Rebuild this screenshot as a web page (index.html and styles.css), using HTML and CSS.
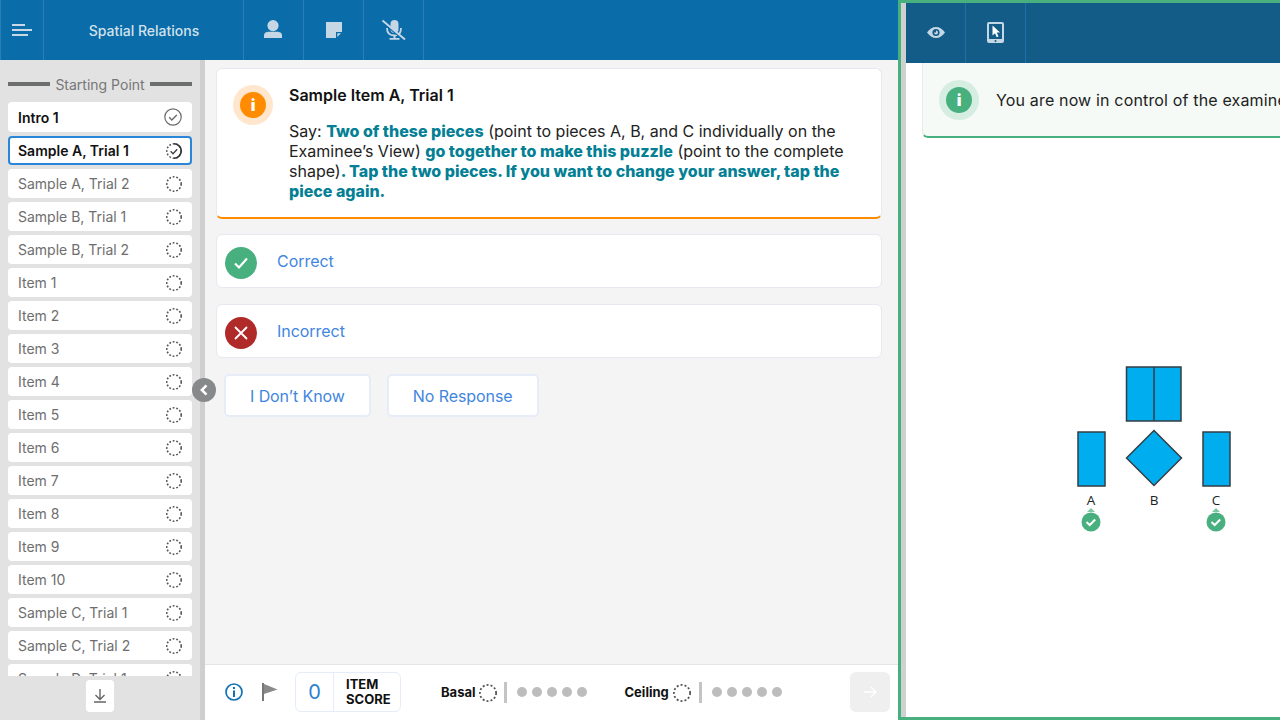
FILE: index.html
```html
<!DOCTYPE html>
<html lang="en">
<head>
<meta charset="utf-8">
<title>Spatial Relations</title>
<link rel="stylesheet" href="styles.css">
</head>
<body>
<svg class="defs" width="0" height="0" aria-hidden="true">
  <symbol id="ring" viewBox="0 0 16 16"><circle cx="8" cy="8" r="7.2" fill="none" stroke="#555" stroke-width="1.6" stroke-dasharray="1.8 1.8"/></symbol>
</svg>
<section class="examiner">
  <header class="topbar">
    <button class="tb tb-menu"><svg width="20" height="12" viewBox="0 0 20 12"><path d="M0 0h13v2H0zM0 5h20v2H0zM0 10h16v2H0z" fill="#c8d8e6"/></svg></button>
    <div class="tb tb-title">Spatial Relations</div>
    <button class="tb tb-icon"><svg class="ic-person" width="18" height="18" viewBox="0 0 18 18"><circle cx="9" cy="5.6" r="5.6" fill="#c5d6e5"/><path d="M0 18v-2.500c0-2.800 2.500-3.800 5-3.800h8c2.500 0 5 1 5 3.800V18z" fill="#c5d6e5"/></svg></button>
    <button class="tb tb-icon"><svg width="16" height="16" viewBox="0 0 16 16"><rect width="16" height="16" fill="#c5d6e5"/><rect x="10" y="10" width="6" height="6" fill="#0a6ca8"/><path d="M11.300 11.300H15L11.300 15z" fill="#c5d6e5"/></svg></button>
    <button class="tb tb-icon"><svg width="26" height="22" viewBox="0 0 26 22"><rect x="9.500" y="1" width="8" height="13" rx="4" fill="#c5d6e5"/><path d="M6 9c0 5 3 7.500 7.500 7.500S20 14 20 9" fill="none" stroke="#c5d6e5" stroke-width="1.800"/><path d="M12.500 16h2v3h-2zM8.500 19h10v1.800h-10z" fill="#c5d6e5"/><path d="M1.500 3.200l22.500 19" stroke="#0a6ca8" stroke-width="1.600"/><path d="M1.500 1.500l22.500 19" stroke="#c5d6e5" stroke-width="2"/></svg></button>
  </header>
  <div class="workspace">
    <aside class="sidebar">
      <div class="side-head"><span class="rule"></span><span>Starting Point</span><span class="rule"></span></div>
      <ul class="items">
        <li class="item done"><span>Intro 1</span><svg width="18" height="18" viewBox="0 0 18 18"><circle cx="9" cy="9" r="8.200" fill="none" stroke="#6b6b6b" stroke-width="1.200"/><path d="M5.200 9.300l2.600 2.600 5-5" fill="none" stroke="#6b6b6b" stroke-width="1.400"/></svg></li>
        <li class="item active"><span>Sample A, Trial 1</span><svg width="16" height="16" viewBox="0 0 16 16"><circle cx="8" cy="8" r="7.200" fill="none" stroke="#555" stroke-width="1.500" stroke-dasharray="1.800 1.800"/><path d="M8 .8A7.200 7.200 0 0 1 8 15.200" fill="none" stroke="#333" stroke-width="1.600"/><path d="M4.600 8.300l2.400 2.400 4.200-4.500" fill="none" stroke="#444" stroke-width="1.400"/></svg></li>
        <li class="item"><span>Sample A, Trial 2</span><svg class="ring"><use href="#ring"/></svg></li>
        <li class="item"><span>Sample B, Trial 1</span><svg class="ring"><use href="#ring"/></svg></li>
        <li class="item"><span>Sample B, Trial 2</span><svg class="ring"><use href="#ring"/></svg></li>
        <li class="item"><span>Item 1</span><svg class="ring"><use href="#ring"/></svg></li>
        <li class="item"><span>Item 2</span><svg class="ring"><use href="#ring"/></svg></li>
        <li class="item"><span>Item 3</span><svg class="ring"><use href="#ring"/></svg></li>
        <li class="item"><span>Item 4</span><svg class="ring"><use href="#ring"/></svg></li>
        <li class="item"><span>Item 5</span><svg class="ring"><use href="#ring"/></svg></li>
        <li class="item"><span>Item 6</span><svg class="ring"><use href="#ring"/></svg></li>
        <li class="item"><span>Item 7</span><svg class="ring"><use href="#ring"/></svg></li>
        <li class="item"><span>Item 8</span><svg class="ring"><use href="#ring"/></svg></li>
        <li class="item"><span>Item 9</span><svg class="ring"><use href="#ring"/></svg></li>
        <li class="item"><span>Item 10</span><svg class="ring"><use href="#ring"/></svg></li>
        <li class="item"><span>Sample C, Trial 1</span><svg class="ring"><use href="#ring"/></svg></li>
        <li class="item"><span>Sample C, Trial 2</span><svg class="ring"><use href="#ring"/></svg></li>
        <li class="item"><span>Sample D, Trial 1</span><svg class="ring"><use href="#ring"/></svg></li>
      </ul>
      <div class="side-foot"><button class="down"><svg width="14" height="14" viewBox="0 0 14 14"><path d="M7 0v10M2.500 6L7 10.500 11.500 6M1 13h12" fill="none" stroke="#666" stroke-width="1.400"/></svg></button></div>
    </aside>
    <button class="collapse"><svg width="10" height="12" viewBox="0 0 10 12"><path d="M7.500 1.300L2.800 6l4.700 4.700" fill="none" stroke="#fff" stroke-width="2.500"/></svg></button>
    <main class="main">
      <div class="content">
        <article class="card">
          <div class="halo halo-orange"><span class="dot dot-orange">i</span></div>
          <div class="card-text">
            <h2>Sample Item A, Trial 1</h2>
            <p>Say: <b>Two of these pieces</b> (point to pieces A, B, and C individually on the Examinee’s View) <b>go together to make this puzzle</b> (point to the complete shape)<b>. Tap the two pieces. If you want to change your answer, tap the piece again.</b></p>
          </div>
        </article>
        <div class="option">
          <span class="opt-icon opt-green"><svg width="16" height="14" viewBox="0 0 16 14"><path d="M2 7.500l4 4 8-9" fill="none" stroke="#fff" stroke-width="2.200"/></svg></span>
          <span>Correct</span>
        </div>
        <div class="option">
          <span class="opt-icon opt-red"><svg width="14" height="14" viewBox="0 0 14 14"><path d="M1 1l12 12M13 1L1 13" fill="none" stroke="#fff" stroke-width="1.800"/></svg></span>
          <span>Incorrect</span>
        </div>
        <div class="actions">
          <button class="act">I Don’t Know</button>
          <button class="act">No Response</button>
        </div>
      </div>
      <footer class="footer">
        <svg class="f-info" width="18" height="18" viewBox="0 0 18 18"><circle cx="9" cy="9" r="8" fill="none" stroke="#1273b4" stroke-width="1.700"/><path d="M8 4h2v2H8zM8 7.500h2V14H8z" fill="#1273b4"/></svg>
        <svg class="f-flag" width="16" height="18" viewBox="0 0 16 18"><path d="M0 0h2v18H0z" fill="#777"/><path d="M2 1l13.500 5.500L2 11z" fill="#8a8a8a"/></svg>
        <div class="score"><span class="score-val">0</span><span class="score-lbl">ITEM<br>SCORE</span></div>
        <div class="meter meter-basal">
          <span class="m-label">Basal</span><svg class="m-ring"><use href="#ring"/></svg><span class="m-bar"></span>
          <span class="pips"><i></i><i></i><i></i><i></i><i></i></span>
        </div>
        <div class="meter meter-ceil">
          <span class="m-label">Ceiling</span><svg class="m-ring"><use href="#ring"/></svg><span class="m-bar"></span>
          <span class="pips"><i></i><i></i><i></i><i></i><i></i></span>
        </div>
        <button class="next"><svg width="14" height="12" viewBox="0 0 14 12"><path d="M1 6h12M8 1l5 5-5 5" fill="none" stroke="#fff" stroke-width="1.400"/></svg></button>
      </footer>
    </main>
  </div>
</section>
<section class="examinee">
  <div class="grip"></div>
  <div class="pane">
    <header class="topbar2">
      <button class="tb2"><svg width="18" height="11" viewBox="0 0 18 11"><path d="M0 5.500C2.500 2 5.500 0 9 0s6.500 2 9 5.500C15.500 9 12.500 11 9 11S2.500 9 0 5.500z" fill="#c5d6e5"/><circle cx="9" cy="5.500" r="3.600" fill="#135c88"/><path d="M9 3.500a2 2 0 1 1-2 2h2z" fill="#c5d6e5"/></svg></button>
      <button class="tb2"><svg width="17" height="21" viewBox="0 0 17 21"><rect width="17" height="21" rx="2" fill="#c5d6e5"/><rect x="2" y="2" width="13" height="15" fill="#135c88"/><path d="M5.500 3.500v10l2.500-2.300 1.800 4 1.700-.8-1.800-3.800h3.300z" fill="#fff"/><circle cx="8.500" cy="19" r="1" fill="#135c88"/></svg></button>
    </header>
    <div class="banner">
      <div class="halo halo-green"><span class="dot dot-green">i</span></div>
      <span class="banner-text">You are now in control of the examinee’s screen.</span>
    </div>
    <div class="stage">
      <svg class="puzzle" width="170" height="175" viewBox="0 0 170 175">
        <g fill="#00adef" stroke="#333d44" stroke-width="1.500">
          <rect x="58.500" y="7" width="54.500" height="54"/>
          <path d="M86 7v54" fill="none"/>
          <rect x="10" y="72" width="27" height="54"/>
          <path d="M86 70.500l27.500 27.500-27.500 27.500-27.500-27.500z"/>
          <rect x="135" y="72" width="27" height="54"/>
        </g>
        <g class="labels">
          <text x="23" y="145">A</text>
          <text x="86" y="145">B</text>
          <text x="148" y="145">C</text>
        </g>
        <g>
          <path d="M23 148l4 4h-8z" fill="#7fc6a4"/>
          <circle cx="23" cy="162" r="9.500" fill="#47b07e"/>
          <path d="M18.500 162l3.200 3 5.500-5.500" fill="none" stroke="#fff" stroke-width="2"/>
          <path d="M148 148l4 4h-8z" fill="#7fc6a4"/>
          <circle cx="148" cy="162" r="9.500" fill="#47b07e"/>
          <path d="M143.500 162l3.200 3 5.500-5.500" fill="none" stroke="#fff" stroke-width="2"/>
        </g>
      </svg>
    </div>
  </div>
</section>
</body>
</html>
```
FILE: styles.css
```css
* { box-sizing: border-box; }
html, body { margin: 0; height: 100%; overflow: hidden; }
body { display: flex; width: 1280px; height: 720px; font-family: Inter, "Liberation Sans", sans-serif; background: #fff; color: #111; }
button { font-family: inherit; border: 0; padding: 0; background: none; }
.defs { position: absolute; }

.examiner { width: 898px; flex: none; display: flex; flex-direction: column; position: relative; }
.topbar { height: 60px; flex: none; display: flex; background: #0a6ca8; }
.tb { height: 60px; display: flex; align-items: center; justify-content: center; border-right: 1px solid #2a80b6; }
.tb-menu { width: 44px; border-left: 1px solid #2a80b6; }
.tb-title { width: 200px; color: #d3e1ec; font-size: 14px; font-weight: 500; padding-left: 1px; }
.tb-icon { width: 60px; }
.ic-person { margin-top: -2px; margin-left: -1px; }

.workspace { flex: 1; min-height: 0; display: flex; position: relative; }
.sidebar { width: 205px; flex: none; display: flex; flex-direction: column; background: #e2e2e2; border-right: 5px solid #cfcfcf; padding: 0 8px; }
.side-head { height: 42px; flex: none; display: flex; align-items: center; gap: 5px; color: #777; font-size: 14px; padding-top: 7px; padding-bottom: 1px; white-space: nowrap; }
.rule { flex: 1; height: 4px; background: #6d6f6e; }
.items { list-style: none; margin: 0; padding: 0; flex: 1; min-height: 0; overflow: hidden; display: flex; flex-direction: column; gap: 4px; }
.item { height: 29px; flex: none; display: flex; align-items: center; justify-content: space-between; background: #fff; border-radius: 4px; padding: 0 10px; font-size: 14px; color: #6e6e6e; }
.item.done { height: 30px; font-weight: 600; color: #111; }
.item.active { font-weight: 600; color: #111; border: 2px solid #2a86d8; padding: 0 8px; }
.ring { width: 16px; height: 16px; flex: none; }
.side-foot { height: 44px; flex: none; display: flex; justify-content: center; padding-top: 4px; }
.down { width: 28px; height: 32px; background: #fff; border-radius: 4px; display: flex; align-items: center; justify-content: center; }

.collapse { position: absolute; left: 192px; top: 318px; width: 24px; height: 24px; border-radius: 50%; background: #868a8a; display: flex; align-items: center; justify-content: center; z-index: 2; }

.main { flex: 1; min-width: 0; display: flex; flex-direction: column; background: #f4f4f4; }
.content { flex: 1; min-height: 0; padding: 8px 16px 0 11px; display: flex; flex-direction: column; }
.card { height: 151px; flex: none; display: flex; gap: 16px; background: #fff; border: 1px solid #e6e9f2; border-bottom: 2px solid #ff8c00; border-radius: 6px; padding: 16px; }
.halo { width: 40px; height: 40px; flex: none; border-radius: 50%; display: flex; align-items: center; justify-content: center; }
.halo-orange { background: #ffe6cc; }
.halo-green { background: #d6eee2; }
.dot { width: 26px; height: 26px; border-radius: 50%; color: #fff; font-weight: 900; font-size: 16px; line-height: 26px; text-align: center; }
.dot-orange { background: #ff8c00; }
.dot-green { background: #47b07e; }
.card-text h2 { margin: 0 0 16px; font-size: 16px; line-height: 20px; font-weight: 600; color: #111; }
.card-text p { margin: 0; font-size: 16px; line-height: 20px; color: #222; }
.card-text b { color: #047f95; font-weight: 800; letter-spacing: -.01px; }

.option { height: 54px; flex: none; margin-top: 16px; display: flex; align-items: center; gap: 20px; padding-left: 8px; background: #fff; border: 1px solid #e6e9f2; border-radius: 6px; color: #3f86e0; font-size: 16px; letter-spacing: -.04px; }
.card + .option { margin-top: 15px; }
.option > span:last-child { margin-top: -1px; }
.opt-icon { width: 32px; height: 32px; border-radius: 50%; display: flex; align-items: center; justify-content: center; margin-top: 3px; }
.opt-green { background: #47b07e; }
.opt-red { background: #b02a2a; }
.actions { display: flex; gap: 16px; margin-top: 16px; padding-left: 8px; }
.act { height: 43px; padding: 0 24px; background: #fff; border: 2px solid #e6ecf8; border-radius: 5px; color: #3f86e0; font-size: 16px; letter-spacing: -.08px; }

.footer { height: 56px; flex: none; display: flex; align-items: center; background: #fff; border-top: 1px solid #e4e4e4; position: relative; padding-left: 20px; }
.f-info { margin-top: -2px; }
.f-flag { margin-left: 19px; margin-top: -2px; }
.score { margin-left: 17px; height: 40px; display: flex; width: 106px; border: 1px solid #e6ecf8; border-radius: 6px; margin-top: -1px; }
.score-val { width: 38px; border-right: 1px solid #e6ecf8; color: #2a7fd0; font-size: 20px; display: flex; align-items: center; justify-content: center; }
.score-lbl { padding-left: 12px; font-size: 13px; line-height: 15px; font-weight: 700; color: #111; padding-top: 4px; }
.meter { display: flex; align-items: center; margin-top: -1px; }
.meter-basal { margin-left: 40px; }
.meter-ceil { margin-left: 38px; }
.m-label { font-size: 13px; font-weight: 700; color: #111; }
.m-ring { width: 18px; height: 18px; flex: none; margin-left: 3px; margin-top: 2px; }
.m-bar { width: 3px; height: 21px; background: #c4c4c4; margin-left: 7px; }
.meter-ceil .m-ring { margin-left: 4px; }
.meter-ceil .m-bar { margin-left: 8px; }
.pips { display: flex; gap: 5px; margin-left: 10px; }
.pips i { width: 10px; height: 10px; border-radius: 50%; background: #bdbdbd; display: block; }
.next { position: absolute; right: 8px; top: 7px; width: 40px; height: 40px; background: #efefef; border-radius: 6px; display: flex; align-items: center; justify-content: center; }

.examinee { flex: 1; min-width: 0; display: flex; border: 3px solid #47b07e; border-right: 0; overflow: hidden; }
.grip { width: 5px; flex: none; background: #d0d0d0; }
.pane { width: 494px; flex: none; display: flex; flex-direction: column; }
.topbar2 { height: 60px; flex: none; display: flex; background: #135c88; }
.tb2 { width: 60px; height: 60px; border-right: 1px solid #1f70a8; display: flex; align-items: center; justify-content: center; }
.tb2 svg { margin-top: -2px; }
.banner { height: 75px; flex: none; margin-left: 16px; display: flex; align-items: center; gap: 17px; padding-left: 16px; background: #f5faf7; border: 1px solid #e6ece9; border-bottom: 2px solid #47b07e; border-radius: 0 0 6px 6px; border-top: 0; }
.banner-text { font-size: 16px; letter-spacing: .16px; white-space: nowrap; color: #222; }
.stage { flex: 1; display: flex; justify-content: center; padding-top: 222px; }
.puzzle { display: block; }
.labels text { font-family: "Open Sans", "Liberation Sans", sans-serif; font-size: 13.5px; text-anchor: middle; fill: #222; }
```
